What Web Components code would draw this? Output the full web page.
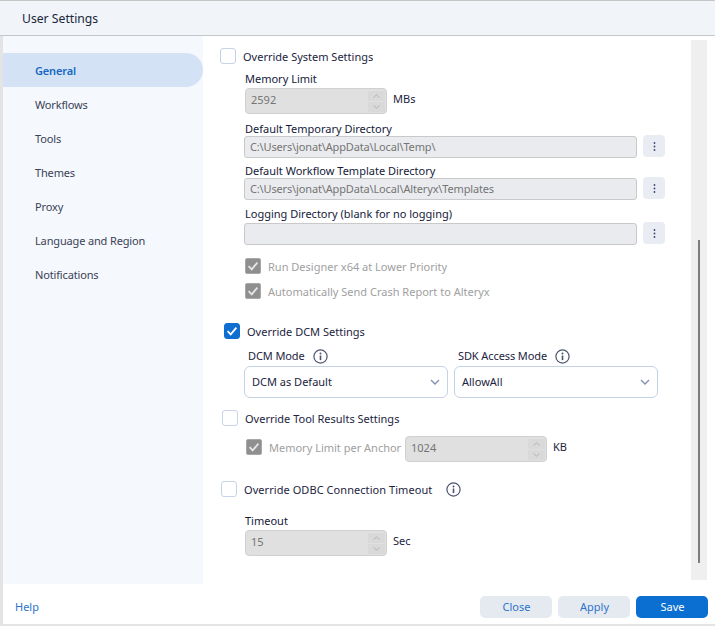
<!DOCTYPE html>
<html lang="en">
<head>
<meta charset="utf-8">
<title>User Settings</title>
<style>
  html, body { margin: 0; height: 100%; background: #fff; }
  body { font-family: "Noto Sans", "Open Sans", sans-serif; font-size: 11px; color: #1c2440; overflow: hidden; }
</style>
</head>
<body>
<user-settings></user-settings>

<template id="nav-item-tpl">
  <style>
    :host { display: flex; align-items: center; height: 34px; padding-left: 32px; color: #3a4256; letter-spacing: -0.15px; }
    :host([active]) { background: #d3e3f5; color: #1568c4; font-weight: 600; border-radius: 0 17px 17px 0; }
  </style>
  <slot></slot>
</template>

<template id="check-row-tpl">
  <style>
    :host { display: flex; align-items: center; height: 18px; color: #1c2440; }
    :host([disabled]) { color: #a0a0a0; }
    .box { box-sizing: border-box; width: 16px; height: 16px; margin-right: 7px; border: 1px solid #c6d3e8; border-radius: 3px; background: #fff; flex: none; display: flex; }
    :host([checked]) .box { background: #0f6fd0; border-color: #0f6fd0; }
    :host([disabled]) .box { background: #8f8f8f; border-color: #a8a8a8; border-radius: 2px; }
    svg { width: 14px; height: 14px; display: none; }
    :host([checked]) svg { display: block; }
    :host([disabled]) path { stroke: #e6e6e6; }
    .text { white-space: nowrap; }
  </style>
  <span class="box"><svg viewBox="0 0 14 14"><path d="M2.6 7.2 5.7 10.4 11.4 3.6" fill="none" stroke="#fff" stroke-width="1.8"/></svg></span>
  <span class="text"><slot></slot></span>
</template>

<template id="number-field-tpl">
  <style>
    :host { display: flex; align-items: center; color: #1c2440; }
    .box { box-sizing: border-box; width: 142px; height: 26px; background: #e0e0e0; border: 1px solid #d0d0d0; border-radius: 4px; color: #757575; display: flex; align-items: center; justify-content: space-between; padding-left: 5px; padding-right: 1px; margin-right: 6px; flex: none; }
    .value { padding-bottom: 4px; }
    .spin { display: flex; flex-direction: column; gap: 1px; }
    .spin svg { display: block; width: 17px; height: 10px; background: #d9d9d9; }
    .unit { position: relative; top: -3px; }
  </style>
  <span class="box">
    <span class="value"></span>
    <span class="spin">
      <svg viewBox="0 0 17 10"><path d="M5.5 6.5 8.5 3.8 11.5 6.5" fill="none" stroke="#b4b4b4"/></svg>
      <svg viewBox="0 0 17 10"><path d="M5.5 3.5 8.5 6.2 11.5 3.5" fill="none" stroke="#b4b4b4"/></svg>
    </span>
  </span>
  <span class="unit"><slot></slot></span>
</template>

<template id="path-field-tpl">
  <style>
    :host { display: flex; align-items: flex-start; gap: 6px; }
    .input { box-sizing: border-box; width: 393px; height: 22px; background: #eaebee; border: 1px solid #c9c9c9; border-radius: 3px; padding: 0 0 2px 5px; color: #757575; display: flex; align-items: center; white-space: nowrap; letter-spacing: -0.15px; }
    .more { width: 22px; height: 22px; margin-top: -1px; background: #eaecf3; border-radius: 4px; display: flex; align-items: center; justify-content: center; }
    svg { width: 3px; height: 9px; display: block; }
  </style>
  <span class="input"><slot></slot></span>
  <span class="more"><svg viewBox="0 0 3 9"><g fill="#3d4470"><circle cx="1.5" cy="1" r=".9"/><circle cx="1.5" cy="4.5" r=".9"/><circle cx="1.5" cy="8" r=".9"/></g></svg></span>
</template>

<template id="select-field-tpl">
  <style>
    :host { display: flex; box-sizing: border-box; width: 204px; height: 32px; align-items: center; justify-content: space-between; background: #fff; border: 1px solid #c5d2e6; border-radius: 6px; padding: 0 7px 0 7px; color: #1c2440; }
    span { padding-bottom: 2px; }
    svg { width: 10px; height: 6px; display: block; }
  </style>
  <span><slot></slot></span>
  <svg viewBox="0 0 10 6"><path d="M1 1 5 5 9 1" fill="none" stroke="#7f8db0" stroke-width="1.3"/></svg>
</template>

<template id="info-icon-tpl">
  <style>
    :host { display: inline-flex; width: 15px; height: 15px; flex: none; }
    svg { width: 15px; height: 15px; display: block; }
  </style>
  <svg viewBox="0 0 15 15"><circle cx="7.5" cy="7.5" r="6.6" fill="none" stroke="#4c5470" stroke-width="1.2"/><circle cx="7.5" cy="4.6" r="1" fill="#4c5470"/><rect x="6.7" y="6.5" width="1.6" height="4.6" fill="#4c5470"/></svg>
</template>

<template id="action-button-tpl">
  <style>
    :host { display: flex; box-sizing: border-box; width: 72px; height: 22px; align-items: center; justify-content: center; border-radius: 5px; padding: 0 0 2px 1px; background: #e5eaf1; color: #2e73c9; }
    :host([primary]) { background: #0b6fd2; color: #fff; }
  </style>
  <slot></slot>
</template>

<template id="user-settings-tpl">
  <style>
    :host { display: flex; flex-direction: column; width: 715px; height: 626px; box-sizing: border-box; background: #fff; }
    header { box-sizing: border-box; height: 36px; flex: none; background: #f1f4f9; border-top: 1px solid #c6c6c6; border-bottom: 1px solid #c6c6c6; padding-left: 22px; display: flex; align-items: center; font-size: 12.2px; color: #20263a; }
    .body { flex: none; height: 548px; display: flex; border-left: 3px solid #e4e4e4; }
    nav { flex: none; width: 200px; box-sizing: border-box; background: #f5f8fd; padding-top: 17px; }
    main { flex: none; width: 488px; box-sizing: border-box; padding-top: 11px; }
    .track { flex: none; width: 16px; margin-top: 4px; height: 540px; background: #efefef; display: flex; justify-content: center; }
    .thumb { width: 2px; height: 323px; margin-top: 200px; background: #7d7d7d; }
    .label { box-sizing: border-box; height: 18px; padding-bottom: 2px; display: flex; align-items: center; white-space: nowrap; color: #141a38; }
    .in { margin-left: 42px; }
    .row { display: flex; }
    footer { box-sizing: border-box; height: 42px; flex: none; border-left: 3px solid #e4e4e4; border-bottom: 2px solid #e4e4e4; display: flex; align-items: center; padding: 6px 7px 0 12px; gap: 6px; color: #2e73c9; }
    footer .help { margin-right: auto; padding-bottom: 2px; }
    .head { box-sizing: border-box; display: flex; align-items: center; height: 20px; gap: 8px; margin-left: 4px; white-space: nowrap; color: #1c2440; letter-spacing: -0.1px; }
    .head span { padding-bottom: 2px; }
  </style>
  <header>User Settings</header>
  <div class="body">
    <nav>
      <nav-item active>General</nav-item>
      <nav-item>Workflows</nav-item>
      <nav-item>Tools</nav-item>
      <nav-item>Themes</nav-item>
      <nav-item>Proxy</nav-item>
      <nav-item>Language and Region</nav-item>
      <nav-item>Notifications</nav-item>
    </nav>
    <main>
      <check-row style="margin-left:17px">Override System Settings</check-row>
      <div class="label in" style="margin-top:5px">Memory Limit</div>
      <number-field value="2592" class="in">MBs</number-field>
      <div class="label in" style="margin-top:6px">Default Temporary Directory</div>
      <path-field style="margin-left:41px;margin-top:-2px">C:\Users\jonat\AppData\Local\Temp\</path-field>
      <div class="label in" style="margin-top:4px">Default Workflow Template Directory</div>
      <path-field style="margin-left:41px;margin-top:-2px">C:\Users\jonat\AppData\Local\Alteryx\Templates</path-field>
      <div class="label in" style="margin-top:5px">Logging Directory (blank for no logging)</div>
      <path-field style="margin-left:41px">&nbsp;</path-field>
      <check-row disabled checked style="margin-left:42px;margin-top:12px">Run Designer x64 at Lower Priority</check-row>
      <check-row disabled checked style="margin-left:42px;margin-top:7px">Automatically Send Crash Report to Alteryx</check-row>
      <check-row checked style="margin-left:21px;margin-top:22px">Override DCM Settings</check-row>
      <div class="row" style="margin-left:41px;margin-top:6px;gap:6px">
        <div style="width:204px">
          <div class="head"><span>DCM Mode</span><info-icon></info-icon></div>
          <select-field>DCM as Default</select-field>
        </div>
        <div style="width:204px">
          <div class="head"><span>SDK Access Mode</span><info-icon></info-icon></div>
          <select-field>AllowAll</select-field>
        </div>
      </div>
      <check-row style="margin-left:19px;margin-top:11px">Override Tool Results Settings</check-row>
      <div class="row" style="margin-left:43px;margin-top:9px;align-items:flex-start">
        <check-row disabled checked style="width:159px;margin-top:2px">Memory Limit per Anchor</check-row>
        <number-field value="1024">KB</number-field>
      </div>
      <div class="row" style="margin-left:18px;margin-top:18px;align-items:center;gap:14px;letter-spacing:.06px">
        <check-row>Override ODBC Connection Timeout</check-row>
        <info-icon></info-icon>
      </div>
      <div class="label in" style="margin-top:14px">Timeout</div>
      <number-field value="15" class="in">Sec</number-field>
    </main>
    <div class="track"><div class="thumb"></div></div>
  </div>
  <footer>
    <span class="help">Help</span>
    <action-button>Close</action-button>
    <action-button>Apply</action-button>
    <action-button primary>Save</action-button>
  </footer>
</template>

<script>
  // every element clones its template into an open shadow root
  function define(name, tplId, setup) {
    customElements.define(name, class extends HTMLElement {
      constructor() {
        super();
        this.attachShadow({ mode: "open" });
        this.shadowRoot.appendChild(document.getElementById(tplId).content.cloneNode(true));
      }
      connectedCallback() {
        if (setup) setup(this);
      }
    });
  }

  define("nav-item", "nav-item-tpl");
  define("check-row", "check-row-tpl");
  define("number-field", "number-field-tpl", (el) => {
    el.shadowRoot.querySelector(".value").textContent = el.getAttribute("value");
  });
  define("path-field", "path-field-tpl");
  define("select-field", "select-field-tpl");
  define("info-icon", "info-icon-tpl");
  define("action-button", "action-button-tpl");
  define("user-settings", "user-settings-tpl");
</script>
</body>
</html>
